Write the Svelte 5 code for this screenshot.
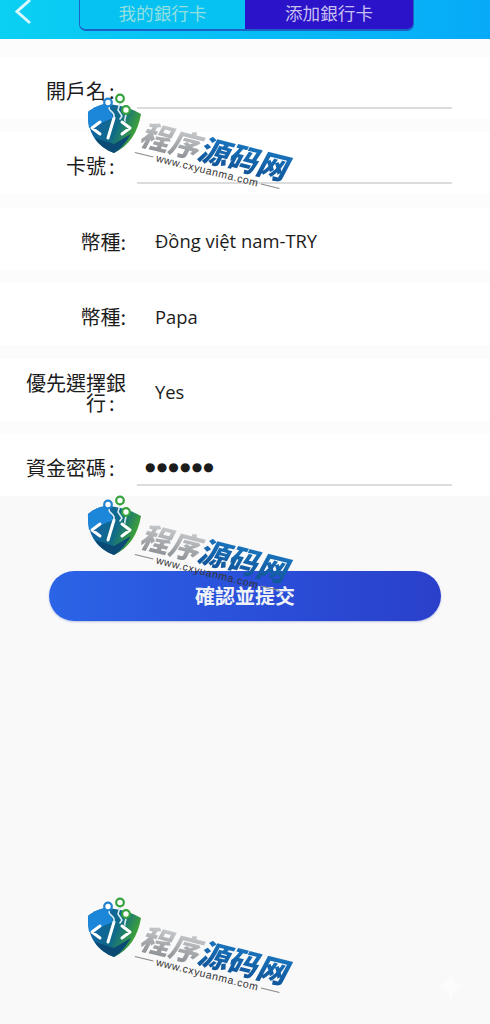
<script>
	const rows = [
		{ label: '開戶名', wide: true, line: true },
		{ label: '卡號', wide: true, line: true },
		{ label: '幣種', value: 'Đồng việt nam-TRY' },
		{ label: '幣種', value: 'Papa' },
		{ label: '優先選擇銀行', wide: true, value: 'Yes' },
		{ label: '資金密碼', wide: true, line: true, dots: '●●●●●●' }
	];
	const marks = [92, 494, 896];
</script>

{#snippet mark(top)}
	<div class="mark" style="top: {top}px">
		<svg class="shield" width="60" height="65" viewBox="0 0 60 65" fill="none">
			<defs>
				<linearGradient id="sh{top}" x1="0" y1="0.2" x2="1" y2="0.6">
					<stop offset="0" stop-color="#1360ae" />
					<stop offset="0.55" stop-color="#0f6a88" />
					<stop offset="1" stop-color="#4db11f" />
				</linearGradient>
			</defs>
			<path d="M3 20C9 15 16 12 23 12C34 13 46 16 56 22C53 40 44 54 29 61C13 55 2 42 3 20Z" fill="url(#sh{top})" />
			<path d="M3 20C9 15 16 12 23 12L28 26L4 36C3 31 3 26 3 20Z" fill="#1c86d8" />
			<path d="M29 61C21 58 14 53 10 46L29 52L46 42C41 50 36 57 29 61Z" fill="#0b4a74" />
			<g stroke-linecap="round" stroke-linejoin="round" fill="none">
				<path d="M15 30L7 36L15 42M37 30L45 36L37 42" stroke="#fff" stroke-width="3" />
				<path d="M29 26L23 46" stroke="#fff" stroke-width="3" />
				<path d="M24 14C23 19 28 19 29 23L29 26" stroke="#d7e9f4" stroke-width="1.6" />
				<path d="M35 11L33 18L37 24L35 27" stroke="#d7e9f4" stroke-width="1.6" />
				<path d="M41 21C41 26 39 27 40 29" stroke="#d7e9f4" stroke-width="1.6" />
				<circle cx="23" cy="10.500" r="3.800" stroke="#1f82d0" stroke-width="2.200" fill="#fff" />
				<circle cx="35" cy="6.500" r="3.800" stroke="#35a23c" stroke-width="2.200" fill="#fff" />
				<circle cx="41" cy="18" r="3.800" stroke="#35a23c" stroke-width="2.200" fill="#fff" />
			</g>
		</svg>
		<div class="brand"><span class="gray">程序</span><span class="blue">源码网</span></div>
		<div class="url"><i></i><span>www.cxyuanma.com</span><i></i></div>
	</div>
{/snippet}

<div class="page">
	<header>
		<svg class="back" width="20" height="26" viewBox="0 0 20 26" fill="none">
			<path d="M16 0L3 11.500L16 23" stroke="#d9f7fd" stroke-width="3" />
		</svg>
		<div class="tabs">
			<div class="tab">我的銀行卡</div>
			<div class="tab active">添加銀行卡</div>
		</div>
	</header>

	<form class="form">
		{#each rows as row}
			<div class="row">
				<div class="label">{row.label}<span class="colon" class:wide={row.wide}>:</span></div>
				<div class="field" class:line={row.line}>
					{#if row.dots}
						<span class="dots">{row.dots}</span>
					{:else if row.value}
						<span class="value">{row.value}</span>
					{/if}
				</div>
			</div>
		{/each}
	</form>

	<button class="submit" type="button">確認並提交</button>

	{#each marks as top}
		{@render mark(top)}
	{/each}

	<svg class="sparkle" width="36" height="36" viewBox="0 0 40 40">
		<path d="M20 2C21 13 25 18 36 20C25 22 21 27 20 38C19 27 15 22 4 20C15 18 19 13 20 2Z" fill="#fff" />
	</svg>
</div>

<style>
	:global(body) {
		background: #f9f9fa;
	}

	.page {
		position: relative;
		width: 490px;
		height: 1024px;
		overflow: hidden;
		font-family: "Noto Sans CJK TC", "Noto Sans", sans-serif;
		color: #1c1c1c;
	}

	header {
		display: flex;
		align-items: flex-start;
		height: 39px;
		padding-left: 14px;
		box-sizing: border-box;
		background: linear-gradient(90deg, #0bd0f2, #07bff6 45%, #07aaf8);
		box-shadow: 0 1px 1px rgba(0, 140, 240, 0.3);
	}

	.back {
		flex: none;
	}

	.tabs {
		display: flex;
		width: 335px;
		height: 31px;
		margin-left: 45px;
		box-sizing: border-box;
		border: 1px solid #1b62c4;
		border-bottom-width: 2px;
		border-top: none;
		border-radius: 0 0 7px 7px;
		overflow: hidden;
	}

	.tab {
		flex: 0 0 165px;
		text-align: center;
		font-size: 17.600px;
		line-height: 25px;
		color: #93dfe0;
		background: #05c2f3;
	}

	.tab.active {
		flex: 1;
		color: #c6bff0;
		background: #2a13c8;
	}

	.form {
		padding-top: 18px;
		background: #fcfcfc;
	}

	.row {
		display: flex;
		align-items: center;
		height: 62px;
		margin-bottom: 13.400px;
		padding: 6px 0 0 25px;
		box-sizing: border-box;
		background: #fff;
	}

	.row:last-child {
		margin-bottom: 0;
	}

	.label {
		flex: none;
		width: 101px;
		font-size: 20px;
		line-height: 20px;
		text-align: right;
	}

	.colon.wide {
		display: inline-block;
		width: 20px;
		padding-left: 3px;
		box-sizing: border-box;
		text-align: left;
	}

	.field {
		display: flex;
		align-items: center;
		width: 315px;
		height: 36px;
		margin-left: 11px;
		box-sizing: border-box;
		border-bottom: 2px solid transparent;
	}

	.field.line {
		border-bottom-color: #dcdcdc;
	}

	.value {
		padding-left: 18px;
		font-family: "Open Sans", sans-serif;
		font-size: 18.400px;
	}

	.dots {
		padding-left: 8px;
		font-family: "DejaVu Sans", sans-serif;
		font-size: 12px;
		letter-spacing: 1.200px;
	}

	.submit {
		display: block;
		width: 392px;
		height: 50px;
		margin: 75px 0 0 49px;
		border: none;
		border-radius: 25px;
		background: linear-gradient(90deg, #2b64e6, #2a4ed8 55%, #2a40cb);
		box-shadow: 0 1px 2px rgba(40, 60, 180, 0.3);
		font-family: inherit;
		font-size: 20px;
		font-weight: 700;
		color: #eef1f6;
	}

	/* watermark stamped over the page */
	.mark {
		position: absolute;
		left: 85px;
		width: 215px;
		height: 105px;
	}

	.shield {
		position: absolute;
		left: 0;
		top: 0;
	}

	.brand {
		position: absolute;
		left: 68px;
		top: 24px;
		white-space: nowrap;
		font-size: 30px;
		line-height: 36px;
		font-weight: 900;
		transform: rotate(14deg) skewX(-14deg);
		transform-origin: left top;
	}

	.gray {
		color: #a9adb2;
		background: linear-gradient(180deg, #d8dadc, #83878b);
		-webkit-background-clip: text;
		background-clip: text;
		-webkit-text-fill-color: transparent;
	}

	.blue {
		color: #1464ae;
		background: linear-gradient(180deg, #1c7dc8, #0f4f92);
		-webkit-background-clip: text;
		background-clip: text;
		-webkit-text-fill-color: transparent;
	}

	.url {
		position: absolute;
		left: 50px;
		top: 54px;
		display: flex;
		align-items: center;
		gap: 3px;
		white-space: nowrap;
		font-family: "Liberation Sans", sans-serif;
		font-size: 10.500px;
		letter-spacing: 0.600px;
		color: #333;
		transform: rotate(14deg);
		transform-origin: left center;
	}

	.url i {
		display: block;
		width: 19px;
		height: 1px;
		background: #888;
	}

	.sparkle {
		position: absolute;
		left: 433px;
		top: 968px;
		opacity: 0.5;
	}
</style>
